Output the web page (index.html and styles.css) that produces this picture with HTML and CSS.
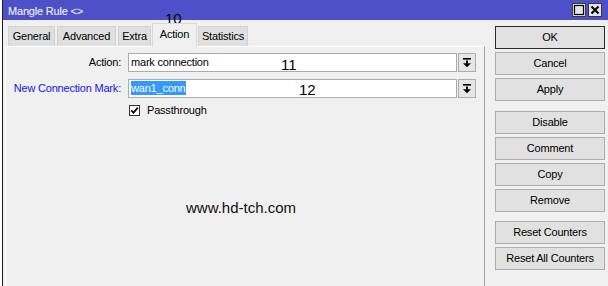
FILE: index.html
```html
<!DOCTYPE html>
<html>
<head>
<meta charset="utf-8">
<link rel="stylesheet" href="styles.css">
</head>
<body>
<div class="screen">
  <div class="backwin"></div>
  <div class="window">
    <div class="titlebar">
      <span class="title">Mangle Rule &lt;&gt;</span>
      <div class="tb-btns">
        <span class="tb-btn"><svg width="12" height="12" viewBox="0 0 12 12"><rect x="1.5" y="1.5" width="9" height="9" fill="none" stroke="#000" stroke-width="1.2"/></svg></span>
        <span class="tb-btn"><svg width="12" height="12" viewBox="0 0 12 12"><path d="M2.5 2.5 L9.5 9.5 M9.5 2.5 L2.5 9.5" stroke="#000" stroke-width="2"/></svg></span>
      </div>
    </div>
    <div class="wbody">
      <div class="tabs-area">
        <div class="tabs">
          <div class="tab t-general">General</div>
          <div class="tab t-advanced">Advanced</div>
          <div class="tab t-extra">Extra</div>
          <div class="tab active t-action">Action</div>
          <div class="tab t-stats">Statistics</div>
        </div>
        <div class="panel">
          <div class="form-row">
            <label class="lbl">Action:</label>
            <div class="field">mark connection</div>
            <div class="dd"><svg width="16" height="17" viewBox="0 0 16 17"><rect x="4" y="4" width="8" height="1.6" fill="#000"/><rect x="7" y="6.5" width="2" height="3" fill="#000"/><path d="M4 9.3 H12 L8 13.3 Z" fill="#000"/></svg></div>
          </div>
          <div class="form-row">
            <label class="lbl blue">New Connection Mark:</label>
            <div class="field"><span class="sel">wan1_conn</span></div>
            <div class="dd"><svg width="16" height="17" viewBox="0 0 16 17"><rect x="4" y="4" width="8" height="1.6" fill="#000"/><rect x="7" y="6.5" width="2" height="3" fill="#000"/><path d="M4 9.3 H12 L8 13.3 Z" fill="#000"/></svg></div>
          </div>
          <div class="check-row">
            <span class="checkbox"><svg width="9" height="9" viewBox="0 0 9 9"><path d="M1.2 4.3 L3.5 6.8 L7.8 1.6" fill="none" stroke="#000" stroke-width="1.7"/></svg></span>
            <span class="check-label">Passthrough</span>
          </div>
        </div>
      </div>
      <div class="buttons">
        <div class="btn default">OK</div>
        <div class="btn">Cancel</div>
        <div class="btn">Apply</div>
        <div class="btn sep">Disable</div>
        <div class="btn">Comment</div>
        <div class="btn">Copy</div>
        <div class="btn">Remove</div>
        <div class="btn sep2">Reset Counters</div>
        <div class="btn">Reset All Counters</div>
      </div>
    </div>
  </div>
  <span class="note n10">10</span>
  <span class="note n11">11</span>
  <span class="note n12">12</span>
  <span class="watermark">www.hd-tch.com</span>
</div>
</body>
</html>
```
FILE: styles.css
```css
* { box-sizing: border-box; }
html, body { margin: 0; padding: 0; }
body {
  width: 608px;
  height: 286px;
  overflow: hidden;
  background: #ffffff;
  font-family: "Liberation Sans", Arial, sans-serif;
  font-size: 11px;
  letter-spacing: -0.2px;
  color: #000;
}
.screen {
  position: relative;
  display: flex;
  width: 608px;
  height: 286px;
}
.backwin {
  width: 2px;
  background: #ffffff;
}
.window {
  flex: 1;
  display: flex;
  flex-direction: column;
  background: #f0f0f0;
  border-left: 1px solid #1e1e1e;
}
.titlebar {
  height: 20px;
  background: #4e50c8;
  display: flex;
  align-items: center;
  padding-left: 5px;
  padding-right: 6px;
}
.title {
  color: #fff;
  flex: 1;
  line-height: 20px;
  padding-top: 1px;
}
.tb-btns {
  display: flex;
  gap: 2px;
}
.tb-btn {
  width: 14px;
  height: 14px;
  background: #e4e4e4;
  border: 1px solid #3a3a3a;
  display: flex;
  align-items: center;
  justify-content: center;
}
.tb-btn svg { display: block; }
.wbody {
  flex: 1;
  display: flex;
  padding-left: 2px;
}
.tabs-area {
  width: 480px;
  display: flex;
  flex-direction: column;
}
.tabs {
  height: 26px;
  margin-top: 0;
  display: flex;
  align-items: flex-end;
  gap: 2px;
  padding-left: 3px;
  position: relative;
  z-index: 1;
}
.tab {
  height: 20px;
  line-height: 19px;
  text-align: center;
  background: #dfdfdf;
  border: 1px solid #d2d2d2;
  border-bottom: none;
  color: #000;
}
.t-general { width: 47px; }
.t-advanced { width: 59px; }
.t-extra { width: 33px; }
.t-action { width: 45px; }
.t-stats { width: 50px; }
.tab.active {
  height: 24px;
  line-height: 20px;
  margin: 0 -1px -1px -1px;
  background: #f0f0f0;
  border: 1px solid #d8d8d8;
  border-bottom: none;
}
.panel {
  flex: 1;
  border-top: 1px solid #ffffff;
  border-left: 1px solid #ffffff;
  border-right: 1px solid #a0a0a0;
  padding-top: 6px;
}
.form-row {
  display: flex;
  height: 19px;
  margin-bottom: 7px;
}
.lbl {
  width: 115px;
  margin-right: 7px;
  text-align: right;
  line-height: 19px;
}
.lbl.blue { color: #1414e6; }
.field {
  width: 329px;
  height: 19px;
  background: #fff;
  border: 1px solid #acacac;
  padding-left: 2px;
  line-height: 17px;
  white-space: nowrap;
}
.sel {
  display: inline-block;
  background: #3399ff;
  color: #fff;
  line-height: 14px;
  padding: 0 1px 0 0;
  margin-top: 1px;
  vertical-align: top;
}
.dd {
  width: 18px;
  height: 19px;
  margin-left: 1px;
  background: #e6e6e6;
  border: 1px solid #adadad;
  display: flex;
  align-items: center;
  justify-content: center;
}
.dd svg { display: block; }
.check-row {
  display: flex;
  align-items: center;
  margin-top: -1px;
  padding-left: 123px;
  height: 12px;
}
.checkbox {
  width: 11px;
  height: 11px;
  border: 1px solid #333;
  background: #fff;
  display: flex;
  align-items: center;
  justify-content: center;
}
.checkbox svg { display: block; }
.check-label {
  margin-left: 7px;
  line-height: 12px;
}
.buttons {
  width: 110px;
  margin-left: 10px;
  padding-top: 6px;
  display: flex;
  flex-direction: column;
  gap: 3px;
}
.btn {
  height: 23px;
  line-height: 21px;
  text-align: center;
  background: #e1e1e1;
  border: 1px solid #adadad;
}
.btn.default {
  border: 1px solid #2b2b2b;
}
.btn.sep { margin-top: 7px; }
.btn.sep2 { margin-top: 6px; }
.note {
  position: absolute;
  font-size: 15px;
  line-height: 17px;
  letter-spacing: 0;
  color: #000;
}
.n10 { left: 165px; top: 10px; }
.n11 { left: 281px; top: 56px; }
.n12 { left: 299px; top: 81px; }
.watermark {
  position: absolute;
  left: 186px;
  top: 199px;
  font-size: 15px;
  line-height: 17px;
  letter-spacing: 0;
  color: #111;
}
```
